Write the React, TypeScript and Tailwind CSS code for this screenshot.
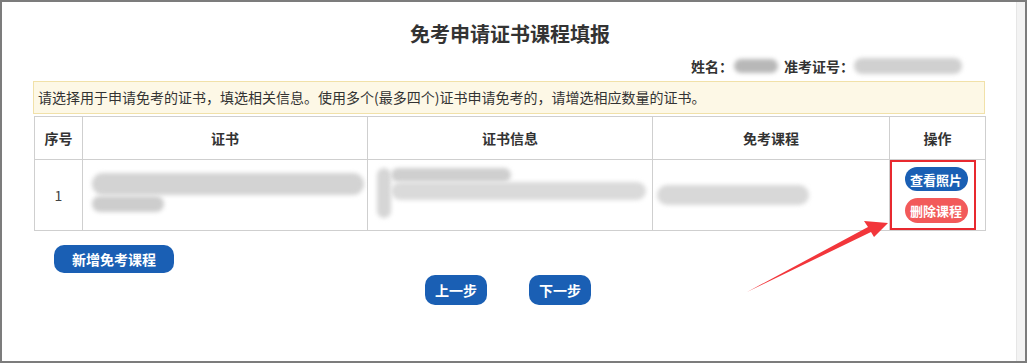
import React from "react";

const font = { fontFamily: '"Noto Sans CJK SC", "Noto Sans", sans-serif' };

function Blur({ className }: { className: string }) {
  return <div className={`rounded-full blur-[2px] ${className}`} />;
}

export default function App() {
  return (
    <div
      style={font}
      className="relative w-[1027px] h-[363px] bg-white border-2 border-[#7c7c7c] flex overflow-hidden text-[#333]"
    >
      <div className="flex-1 flex flex-col">
        <h1 className="text-center text-[20px] font-bold leading-[28px] pt-[18px] pl-[2px] text-[#333]">
          免考申请证书课程填报
        </h1>
        <div className="flex justify-end items-center pr-[54px] mt-[6px] h-[24px] text-[14px] font-bold">
          <span>姓名：</span>
          <Blur className="w-[44px] h-[14px] bg-[#b8b8b8] ml-[1px]" />
          <span className="ml-[6px]">准考证号：</span>
          <Blur className="w-[108px] h-[16px] bg-[#d0d0d0]" />
        </div>
        <div className="ml-[31px] w-[952px] mt-[3px] h-[33px] bg-[#fdf8e6] border border-[#f1e1a9] flex items-center pl-[4px] text-[14px] text-[#333]">
          请选择用于申请免考的证书，填选相关信息。使用多个(最多四个)证书申请免考的，请增选相应数量的证书。
        </div>
        <table className="ml-[32px] mt-[2px] border-collapse table-fixed w-[951px] text-[14px]">
          <colgroup>
            <col className="w-[48px]" />
            <col className="w-[285px]" />
            <col className="w-[285px]" />
            <col className="w-[237px]" />
            <col className="w-[96px]" />
          </colgroup>
          <thead>
            <tr className="h-[43px]">
              {["序号", "证书", "证书信息", "免考课程", "操作"].map((h) => (
                <th key={h} className="border border-[#cfcfcf] font-bold text-center text-[#333]">
                  {h}
                </th>
              ))}
            </tr>
          </thead>
          <tbody>
            <tr className="h-[71px]">
              <td className="border border-[#cfcfcf] text-center text-[#444]">1</td>
              <td className="border border-[#cfcfcf] align-top">
                <div className="pl-[9px] pt-[13px]">
                  <div className="flex">
                    <Blur className="w-[272px] h-[22px] bg-[#d3d3d3] rounded-[6px]" />
                  </div>
                  <Blur className="w-[72px] h-[16px] bg-[#cdcdcd] rounded-[2px] mt-[1px]" />
                </div>
              </td>
              <td className="border border-[#cfcfcf] align-top">
                <div className="pl-[9px] pt-[8px] flex">
                  <Blur className="w-[14px] h-[50px] bg-[#d6d6d6] rounded-[4px]" />
                  <div className="flex flex-col">
                    <Blur className="w-[120px] h-[14px] bg-[#cfcfcf] rounded-[2px]" />
                    <Blur className="w-[255px] h-[18px] bg-[#dadada] rounded-[8px]" />
                  </div>
                </div>
              </td>
              <td className="border border-[#cfcfcf]">
                <div className="pl-[4px] flex">
                  <Blur className="w-[152px] h-[20px] bg-[#d8d8d8]" />
                </div>
              </td>
              <td className="border border-[#cfcfcf] p-0 align-top">
                <div className="w-[86px] h-[70px] border-2 border-[#e8292f] flex flex-col items-center justify-center gap-[7px] pl-[6px]">
                  <button className="w-[63px] h-[24px] rounded-full bg-[#1a5fb4] text-white text-[13px] font-bold leading-none">
                    查看照片
                  </button>
                  <button className="w-[63px] h-[25px] rounded-full bg-[#f25a5a] text-white text-[13px] font-bold leading-none">
                    删除课程
                  </button>
                </div>
              </td>
            </tr>
          </tbody>
        </table>
        <div className="ml-[52px] mt-[14px]">
          <button className="w-[120px] h-[28px] rounded-[10px] bg-[#1a5fb4] text-white text-[14px] font-bold">
            新增免考课程
          </button>
        </div>
        <div className="flex justify-center gap-[42px] mt-[2px] pr-[2px]">
          <button className="w-[62px] h-[30px] rounded-[10px] bg-[#1a5fb4] text-white text-[14px] font-bold">
            上一步
          </button>
          <button className="w-[62px] h-[30px] rounded-[10px] bg-[#1a5fb4] text-white text-[14px] font-bold">
            下一步
          </button>
        </div>
      </div>
      <div className="w-[9px] bg-[#f3f3f3] border-l border-[#e6e6e6]" />
      <svg className="absolute left-0 top-0 pointer-events-none" width="1027" height="363">
        <polygon points="745,290 866,225 862,219 886,221 872,235 869,230" fill="#f2363b" />
      </svg>
    </div>
  );
}
